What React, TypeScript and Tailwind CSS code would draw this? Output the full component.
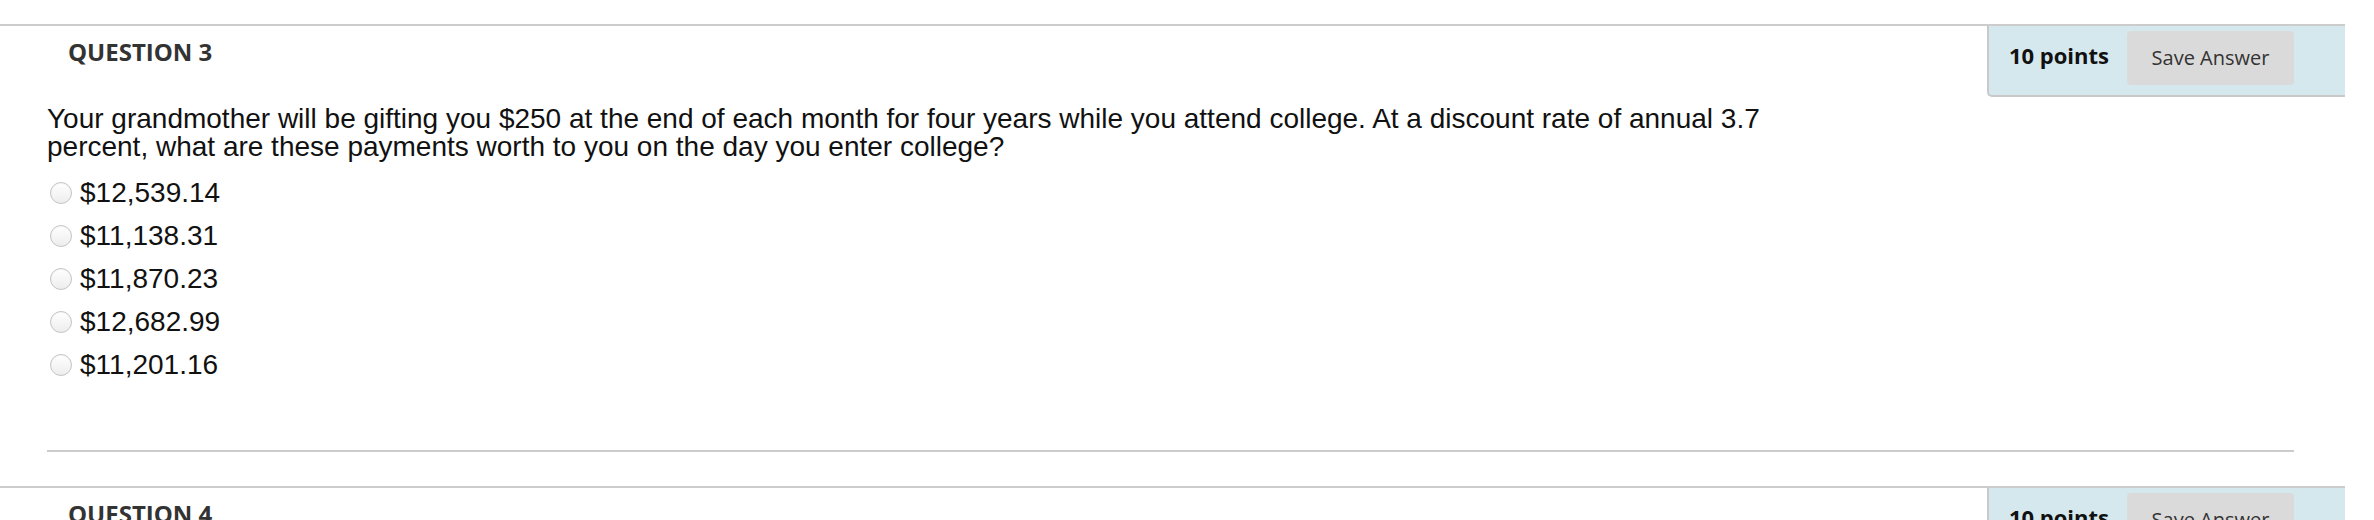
const OPTIONS = ["$12,539.14", "$11,138.31", "$11,870.23", "$12,682.99", "$11,201.16"];

function PointsPanel({ points }: { points: number }) {
  return (
    <div className="flex items-center gap-[18px] h-[71px] pl-[20px] pr-[51px] pt-[5px] pb-[10px] bg-[#d5e8ee] border-l-2 border-b-2 border-[#c9c9c9] rounded-bl-[5px]">
      <span className="pb-[6px] text-[22px] font-bold text-[#111] font-['Open_Sans',sans-serif]">{points} points</span>
      <button className="w-[167px] h-[54px] rounded-[4px] bg-[#dadada] text-[20px] text-[#333] font-['Open_Sans',sans-serif]">
        Save Answer
      </button>
    </div>
  );
}

function Radio() {
  return (
    <span className="ml-[3px] w-[22px] h-[22px] shrink-0 rounded-full border border-[#c4c4c4] bg-linear-to-b from-white to-[#ededed] shadow-[inset_0_1px_1px_rgba(0,0,0,0.04)]" />
  );
}

function Question({ num, text, options }: { num: number; text?: string; options?: string[] }) {
  return (
    <div className="border-t-2 border-[#cccccc]">
      <div className="flex items-start justify-between">
        <h3 className="pl-[68px] pt-[10px] text-[24px] leading-[32px] font-bold text-[#333] font-['Open_Sans',sans-serif]">
          QUESTION {num}
        </h3>
        <PointsPanel points={10} />
      </div>
      {text && (
        <div className="pl-[47px] pr-[51px]">
          <div className="border-b-2 border-[#cccccc] pb-[64px]">
            <p className="pt-[8px] max-w-[1790px] text-[28px] leading-[28px] text-[#111] font-['Liberation_Sans',Arial,sans-serif]">
              {text}
            </p>
            <ul className="mt-[10px]">
              {options?.map((o) => (
                <li key={o} className="h-[43px] flex items-center gap-[8px]">
                  <Radio />
                  <span className="text-[28px] leading-[28px] text-[#111] font-['Liberation_Sans',Arial,sans-serif]">{o}</span>
                </li>
              ))}
            </ul>
          </div>
        </div>
      )}
    </div>
  );
}

export default function App() {
  return (
    <div className="w-[2345px] pt-[24px] bg-white">
      <div className="flex flex-col gap-[34px]">
        <Question
          num={3}
          text="Your grandmother will be gifting you $250 at the end of each month for four years while you attend college. At a discount rate of annual 3.7 percent, what are these payments worth to you on the day you enter college?"
          options={OPTIONS}
        />
        <Question num={4} />
      </div>
    </div>
  );
}
